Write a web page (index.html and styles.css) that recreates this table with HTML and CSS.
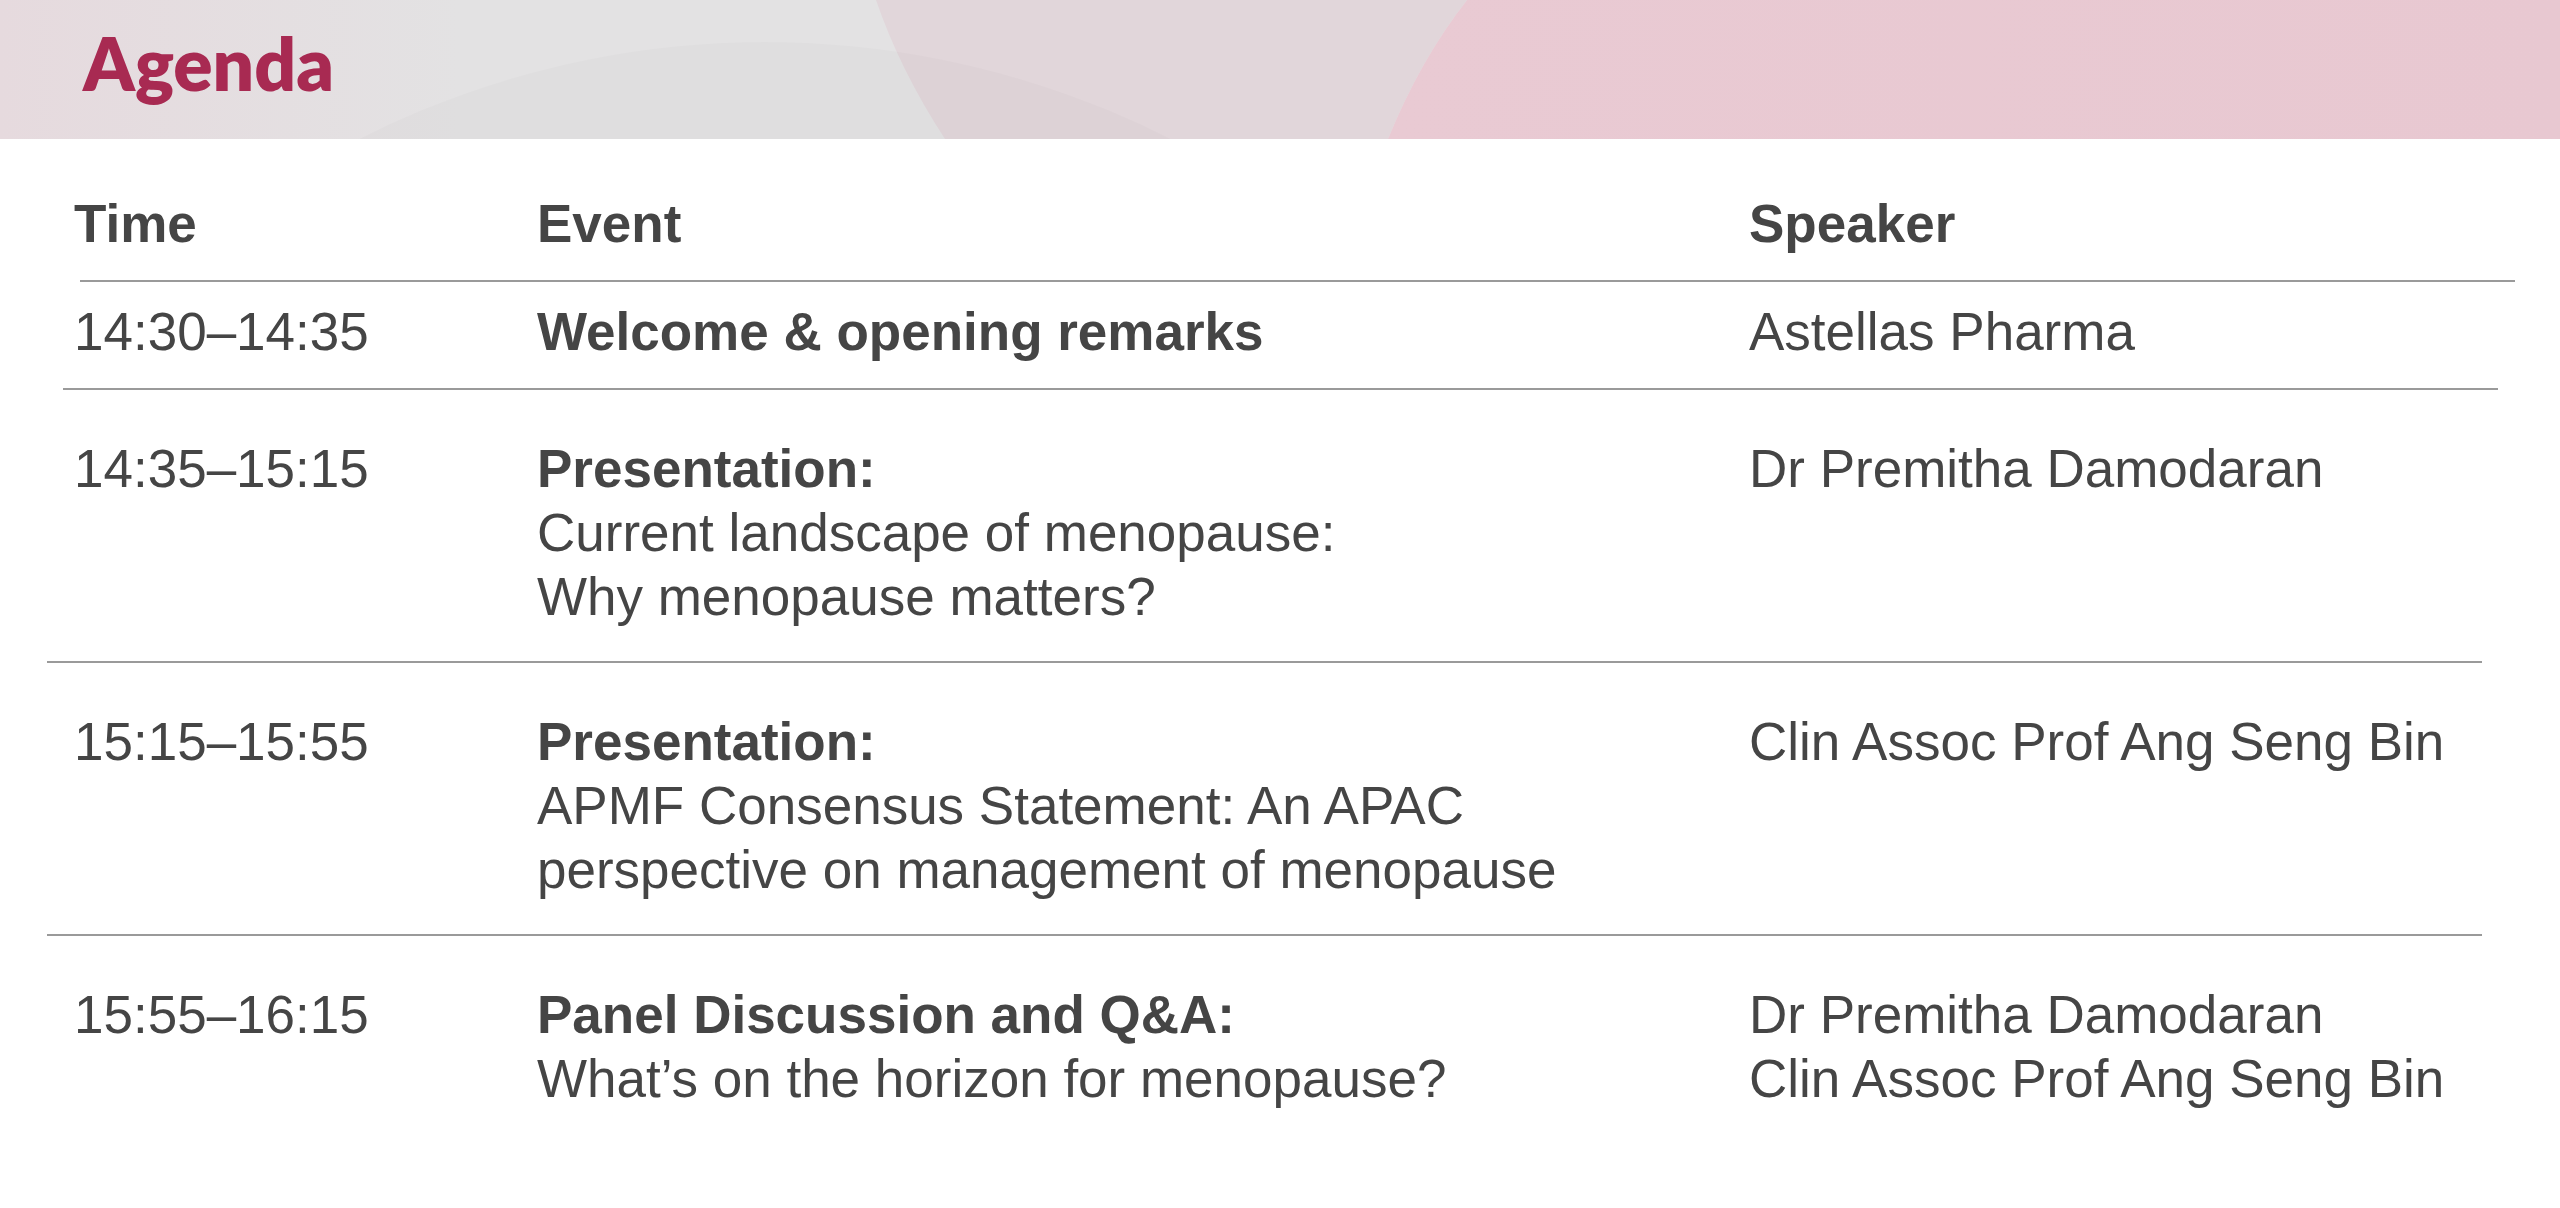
FILE: index.html
```html
<!DOCTYPE html>
<html lang="en">
<head>
<meta charset="utf-8">
<title>Agenda</title>
<link rel="stylesheet" href="styles.css">
</head>
<body>
<header class="banner">
  <svg class="banner-bg" viewBox="0 0 2560 139" preserveAspectRatio="none" aria-hidden="true">
    <defs>
      <linearGradient id="leftTint" x1="0" y1="0" x2="1" y2="0">
        <stop offset="0" stop-color="#e6dade" stop-opacity="1"/>
        <stop offset="1" stop-color="#e6dade" stop-opacity="0"/>
      </linearGradient>
      <linearGradient id="pinkGrad" x1="0" y1="0" x2="1" y2="0">
        <stop offset="0" stop-color="#e9cad3"/>
        <stop offset="1" stop-color="#e8c8d1"/>
      </linearGradient>
    </defs>
    <rect x="0" y="0" width="2560" height="139" fill="#e3e2e3"/>
    <rect x="0" y="0" width="460" height="139" fill="url(#leftTint)"/>
    <path d="M876 0 Q 900 70 945 139 L 1388 139 Q 1420 60 1467 0 Z" fill="#e1d6da"/>
    <circle cx="765" cy="940" r="898" fill="#000" fill-opacity="0.014"/>
    <path d="M1467 0 Q 1420 60 1388 139 L 2560 139 L 2560 0 Z" fill="url(#pinkGrad)"/>
  </svg>
  <h1 class="title">Agenda</h1>
</header>

<main class="agenda">
  <div class="row row--head">
    <div class="cell">Time</div>
    <div class="cell">Event</div>
    <div class="cell">Speaker</div>
  </div>
  <div class="rule rule--first"></div>

  <div class="row row--single">
    <div class="cell">14:30–14:35</div>
    <div class="cell"><span class="line strong">Welcome &amp; opening remarks</span></div>
    <div class="cell">Astellas Pharma</div>
  </div>
  <div class="rule rule--second"></div>

  <div class="row">
    <div class="cell">14:35–15:15</div>
    <div class="cell">
      <span class="line strong">Presentation:</span>
      <span class="line">Current landscape of menopause:</span>
      <span class="line">Why menopause matters?</span>
    </div>
    <div class="cell">Dr Premitha Damodaran</div>
  </div>
  <div class="rule rule--third"></div>

  <div class="row">
    <div class="cell">15:15–15:55</div>
    <div class="cell">
      <span class="line strong">Presentation:</span>
      <span class="line">APMF Consensus Statement: An APAC</span>
      <span class="line">perspective on management of menopause</span>
    </div>
    <div class="cell">Clin Assoc Prof Ang Seng Bin</div>
  </div>
  <div class="rule rule--third"></div>

  <div class="row">
    <div class="cell">15:55–16:15</div>
    <div class="cell">
      <span class="line strong">Panel Discussion and Q&amp;A:</span>
      <span class="line">What’s on the horizon for menopause?</span>
    </div>
    <div class="cell">
      <span class="line">Dr Premitha Damodaran</span>
      <span class="line">Clin Assoc Prof Ang Seng Bin</span>
    </div>
  </div>
</main>
</body>
</html>
```

FILE: styles.css
```css
* {
  box-sizing: border-box;
}

html, body {
  margin: 0;
  padding: 0;
  background: #ffffff;
}

body {
  width: 2560px;
  height: 1208px;
  overflow: hidden;
  font-family: "Liberation Sans", Arial, sans-serif;
  color: #454545;
}

.banner {
  position: relative;
  height: 139px;
  overflow: hidden;
}

.banner-bg {
  position: absolute;
  top: 0;
  left: 0;
  width: 100%;
  height: 100%;
  display: block;
}

.title {
  position: relative;
  margin: 0;
  padding: 20px 0 0 83px;
  font-family: Lato, "Open Sans", sans-serif;
  font-weight: 800;
  font-size: 73px;
  line-height: 86px;
  color: #a82a52;
  letter-spacing: 0;
}

.agenda {
  display: flex;
  flex-direction: column;
}

.row {
  display: grid;
  grid-template-columns: 463px 1212px 1fr;
  padding: 47px 0 32px 74px;
  font-size: 53px;
  line-height: 64px;
}

.row--head {
  padding-top: 53px;
  padding-bottom: 24px;
  font-weight: 700;
}

.row--single {
  padding-top: 18px;
  padding-bottom: 24px;
}

.cell {
  display: flex;
  flex-direction: column;
  white-space: nowrap;
}

.line {
  display: block;
}

.strong {
  font-weight: 700;
}

.rule {
  height: 2px;
  background: #9a9a9a;
}

.rule--first {
  margin: 0 45px 0 80px;
}

.rule--second {
  margin: 0 62px 0 63px;
}

.rule--third {
  margin: 0 78px 0 47px;
}
```
